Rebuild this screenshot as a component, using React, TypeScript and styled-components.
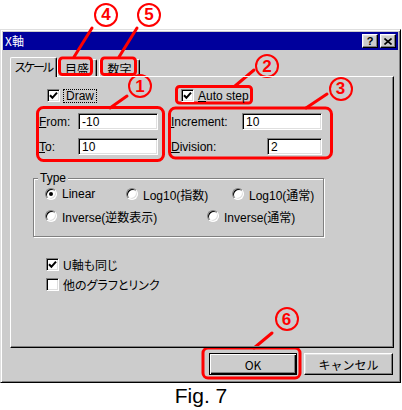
import React from "react";
import styled, { createGlobalStyle, css } from "styled-components";

const FACE = "#cccccc";
const RED = "#ff0000";

const GlobalStyle = createGlobalStyle`
  html, body {
    margin: 0;
    padding: 0;
    background: #fff;
  }
  body {
    font-family: "Liberation Sans", "Noto Sans CJK JP", sans-serif;
    font-size: 12px;
    font-feature-settings: "palt";
    color: #000;
  }
`;

const raised = css`
  border-style: solid;
  border-width: 1px;
  border-color: #fff #000 #000 #fff;
  box-shadow: inset -1px -1px #808080, inset 1px 1px #dfdfdf;
`;

const sunken = css`
  border-style: solid;
  border-width: 1px;
  border-color: #808080 #fff #fff #808080;
  box-shadow: inset 1px 1px #000, inset -1px -1px #dfdfdf;
`;

const Page = styled.div`
  position: relative;
  box-sizing: border-box;
  width: 402px;
  height: 410px;
  padding-top: 29px;
  background: #fff;
  overflow: hidden;
`;

const Window = styled.div`
  box-sizing: border-box;
  display: flex;
  flex-direction: column;
  width: 401px;
  height: 354px;
  padding: 2px;
  background: ${FACE};
  border-style: solid;
  border-width: 1px;
  border-color: #dfdfdf #000 #000 #dfdfdf;
  box-shadow: inset 1px 1px #fff, inset -1px -1px #808080;
`;

const TitleBar = styled.div`
  display: flex;
  align-items: center;
  height: 18px;
  padding: 0 2px;
  background: #00009c;
  color: #fff;
`;

const Title = styled.span`
  flex: 1;
  font-family: "Noto Sans CJK JP", sans-serif;
  font-size: 12px;
  line-height: 18px;
`;

const TitleButton = styled.span`
  box-sizing: border-box;
  display: flex;
  align-items: center;
  justify-content: center;
  width: 16px;
  height: 14px;
  margin-left: 2px;
  background: ${FACE};
  color: #000;
  font: bold 11px/12px "Liberation Sans", sans-serif;
  ${raised};
`;

const TabStrip = styled.div`
  display: flex;
  align-items: flex-end;
  height: 19px;
  margin-top: 7px;
  padding-left: 7px;
`;

const Tab = styled.span<{ $active?: boolean; $w: number; $gap?: number; $tight?: boolean }>`
  position: relative;
  box-sizing: border-box;
  display: flex;
  align-items: center;
  justify-content: center;
  width: ${(p) => p.$w}px;
  height: ${(p) => (p.$active ? 20 : 17)}px;
  margin-left: ${(p) => p.$gap ?? 0}px;
  margin-bottom: ${(p) => (p.$active ? -1 : 0)}px;
  z-index: ${(p) => (p.$active ? 2 : 0)};
  padding-bottom: ${(p) => (p.$active ? 2 : 0)}px;
  background: ${FACE};
  border-top: 1px solid #fff;
  border-left: 1px solid #fff;
  border-right: 1px solid #000;
  border-radius: 2px 2px 0 0;
  box-shadow: inset -1px 0 #808080;
  font-family: "Noto Sans CJK JP", sans-serif;
  font-size: 12px;
  letter-spacing: ${(p) => (p.$tight ? -2 : 0)}px;
  white-space: nowrap;
`;

const Panel = styled.div`
  position: relative;
  z-index: 1;
  box-sizing: border-box;
  display: flex;
  flex-direction: column;
  width: 384px;
  height: 272px;
  margin-left: 7px;
  padding-top: 12px;
  border-top: 1px solid #fff;
  border-left: 1px solid #fff;
  border-right: 1px solid #000;
  border-bottom: 1px solid #000;
  box-shadow: inset -1px -1px #808080;
`;

const TopSection = styled.div`
  display: flex;
  gap: 13px;
  margin-left: 28px;
`;

const Column = styled.div<{ $w: number }>`
  display: flex;
  flex-direction: column;
  width: ${(p) => p.$w}px;
`;

const CheckRow = styled.label<{ $indent?: number; $gap?: number }>`
  display: flex;
  align-items: center;
  gap: ${(p) => p.$gap ?? 4}px;
  height: 13px;
  margin-left: ${(p) => p.$indent ?? 0}px;
  white-space: nowrap;
`;

const CheckBox = styled.span`
  box-sizing: border-box;
  display: flex;
  align-items: center;
  justify-content: center;
  flex: none;
  width: 13px;
  height: 13px;
  background: #fff;
  ${sunken};
`;

const FocusLabel = styled.span`
  padding: 0 2px;
  line-height: 12px;
  border: 1px dotted #000;
`;

const FieldRow = styled.div<{ $top: number }>`
  display: flex;
  align-items: center;
  justify-content: space-between;
  height: 17px;
  margin-top: ${(p) => p.$top}px;
`;

const TextBox = styled.input<{ $w: number }>`
  box-sizing: border-box;
  width: ${(p) => p.$w}px;
  height: 17px;
  margin: 0;
  padding: 0 0 0 3px;
  background: #fff;
  font-family: "Liberation Sans", sans-serif;
  font-size: 12px;
  color: #000;
  outline: none;
  ${sunken};
`;

const Group = styled.fieldset`
  box-sizing: border-box;
  width: 291px;
  height: 66px;
  min-inline-size: 0;
  margin: 16px 0 0 22px;
  padding: 0 0 0 4px;
  border: 1px solid #808080;
  box-shadow: inset 1px 1px #fff, 1px 1px #fff;
`;

const Legend = styled.legend`
  padding: 0 2px;
  line-height: 15px;
  background: ${FACE};
`;

const RadioRow = styled.div<{ $top?: number }>`
  display: flex;
  align-items: center;
  height: 16px;
  margin-top: ${(p) => p.$top ?? 0}px;
  padding-left: 7px;
`;

const RadioItem = styled.label<{ $w?: number }>`
  display: flex;
  align-items: center;
  gap: 5px;
  width: ${(p) => (p.$w ? `${p.$w}px` : "auto")};
  white-space: nowrap;
`;

const Radio = styled.span<{ $on?: boolean }>`
  position: relative;
  box-sizing: border-box;
  flex: none;
  width: 12px;
  height: 12px;
  border-radius: 50%;
  background: #fff;
  border: 1px solid;
  border-color: #808080 #fff #fff #808080;
  box-shadow: inset 1px 1px #000, inset -1px -1px #dfdfdf;

  &::after {
    content: "";
    display: ${(p) => (p.$on ? "block" : "none")};
    position: absolute;
    left: 3px;
    top: 3px;
    width: 4px;
    height: 4px;
    border-radius: 50%;
    background: #000;
  }
`;

const BottomChecks = styled.div`
  display: flex;
  flex-direction: column;
  gap: 7px;
  margin: 21px 0 0 35px;
`;

const ButtonRow = styled.div`
  display: flex;
  justify-content: flex-end;
  gap: 7px;
  margin-top: 5px;
  padding-right: 5px;
`;

const PushButton = styled.span<{ $w: number; $default?: boolean }>`
  box-sizing: border-box;
  display: flex;
  align-items: center;
  justify-content: center;
  width: ${(p) => p.$w}px;
  height: 22px;
  background: ${FACE};
  font-family: "Noto Sans CJK JP", sans-serif;
  font-size: 12px;
  font-feature-settings: normal;
  ${(p) =>
    p.$default
      ? css`
          border: 1px solid #000;
          box-shadow: inset 1px 1px #fff, inset -1px -1px #000, inset -2px -2px #808080;
        `
      : raised};
`;

const Caption = styled.div`
  margin-top: 1px;
  text-align: center;
  font-family: "Liberation Sans", sans-serif;
  font-size: 21px;
  line-height: 23px;
`;

const Overlay = styled.svg`
  position: absolute;
  left: 0;
  top: 0;
  pointer-events: none;
`;

const Badge = styled.span<{ $x: number; $y: number }>`
  position: absolute;
  box-sizing: border-box;
  left: ${(p) => p.$x - 12}px;
  top: ${(p) => p.$y - 12}px;
  width: 24px;
  height: 24px;
  display: flex;
  align-items: center;
  justify-content: center;
  border: 2px solid ${RED};
  border-radius: 50%;
  color: ${RED};
  font: bold 17px/1 "Liberation Sans", sans-serif;
`;

const Check = () => (
  <svg width="9" height="9" viewBox="0 0 9 9">
    <path d="M1 4.2 L3.4 6.8 L8 1.6" fill="none" stroke="#000" strokeWidth="2" />
  </svg>
);

const CloseGlyph = () => (
  <svg width="8" height="7" viewBox="0 0 8 7">
    <path d="M0.5 0.5 L7.5 6.5 M7.5 0.5 L0.5 6.5" stroke="#000" strokeWidth="1.6" />
  </svg>
);

const boxes = [
  { x: 59.5, y: 58, w: 32, h: 16.5, r: 3 },
  { x: 101.5, y: 58, w: 34, h: 16.5, r: 3 },
  { x: 37.5, y: 107.5, w: 126, h: 53, r: 6 },
  { x: 176.5, y: 86.5, w: 75, h: 16.5, r: 3 },
  { x: 169.5, y: 108, w: 162, h: 50, r: 6 },
  { x: 203, y: 348, w: 97, h: 30, r: 5 },
];

const leaders = [
  [92, 28, 74, 57],
  [137, 28, 119, 57],
  [127, 96, 110, 108],
  [254, 70, 235, 86],
  [327, 94, 306, 108],
  [272, 333, 254, 348],
];

const badges = [
  { n: "4", x: 106, y: 14.5 },
  { n: "5", x: 149, y: 14.5 },
  { n: "1", x: 140, y: 86 },
  { n: "2", x: 267, y: 66 },
  { n: "3", x: 340.5, y: 88.5 },
  { n: "6", x: 286.5, y: 319 },
];

export default function App() {
  return (
    <>
      <GlobalStyle />
      <Page>
        <Window>
          <TitleBar>
            <Title>X軸</Title>
            <TitleButton>?</TitleButton>
            <TitleButton>
              <CloseGlyph />
            </TitleButton>
          </TitleBar>

          <TabStrip>
            <Tab $active $tight $w={47}>スケール</Tab>
            <Tab $w={40}>目盛</Tab>
            <Tab $w={41} $gap={2}>数字</Tab>
          </TabStrip>

          <Panel>
            <TopSection>
              <Column $w={119}>
                <CheckRow $indent={8} $gap={3}>
                  <CheckBox>
                    <Check />
                  </CheckBox>
                  <FocusLabel>Draw</FocusLabel>
                </CheckRow>
                <FieldRow $top={11}>
                  <span>
                    <u>F</u>rom:
                  </span>
                  <TextBox $w={80} readOnly defaultValue="-10" />
                </FieldRow>
                <FieldRow $top={8}>
                  <span>
                    <u>T</u>o:
                  </span>
                  <TextBox $w={80} readOnly defaultValue="10" />
                </FieldRow>
              </Column>
              <Column $w={151}>
                <CheckRow $indent={10}>
                  <CheckBox>
                    <Check />
                  </CheckBox>
                  <span>
                    <u>A</u>uto step
                  </span>
                </CheckRow>
                <FieldRow $top={11}>
                  <span>
                    <u>I</u>ncrement:
                  </span>
                  <TextBox $w={80} readOnly defaultValue="10" />
                </FieldRow>
                <FieldRow $top={8}>
                  <span>
                    <u>D</u>ivision:
                  </span>
                  <TextBox $w={55} readOnly defaultValue="2" />
                </FieldRow>
              </Column>
            </TopSection>

            <Group>
              <Legend>Type</Legend>
              <RadioRow>
                <RadioItem $w={81}>
                  <Radio $on />
                  Linear
                </RadioItem>
                <RadioItem $w={106}>
                  <Radio />
                  Log10(指数)
                </RadioItem>
                <RadioItem>
                  <Radio />
                  Log10(通常)
                </RadioItem>
              </RadioRow>
              <RadioRow $top={6}>
                <RadioItem $w={162}>
                  <Radio />
                  Inverse(逆数表示)
                </RadioItem>
                <RadioItem>
                  <Radio />
                  Inverse(通常)
                </RadioItem>
              </RadioRow>
            </Group>

            <BottomChecks>
              <CheckRow>
                <CheckBox>
                  <Check />
                </CheckBox>
                <span>U軸も同じ</span>
              </CheckRow>
              <CheckRow>
                <CheckBox />
                <span>他のグラフとリンク</span>
              </CheckRow>
            </BottomChecks>
          </Panel>

          <ButtonRow>
            <PushButton $w={88} $default>
              OK
            </PushButton>
            <PushButton $w={89}>キャンセル</PushButton>
          </ButtonRow>
        </Window>

        <Caption>Fig. 7</Caption>

        <Overlay width="402" height="410" viewBox="0 0 402 410">
          {boxes.map((b, i) => (
            <rect
              key={i}
              x={b.x}
              y={b.y}
              width={b.w}
              height={b.h}
              rx={b.r}
              fill="none"
              stroke={RED}
              strokeWidth="3"
            />
          ))}
          {leaders.map(([x1, y1, x2, y2], i) => (
            <line
              key={i}
              x1={x1}
              y1={y1}
              x2={x2}
              y2={y2}
              stroke={RED}
              strokeWidth="3"
              strokeLinecap="round"
            />
          ))}
        </Overlay>
        {badges.map((b) => (
          <Badge key={b.n} $x={b.x} $y={b.y}>
            {b.n}
          </Badge>
        ))}
      </Page>
    </>
  );
}
